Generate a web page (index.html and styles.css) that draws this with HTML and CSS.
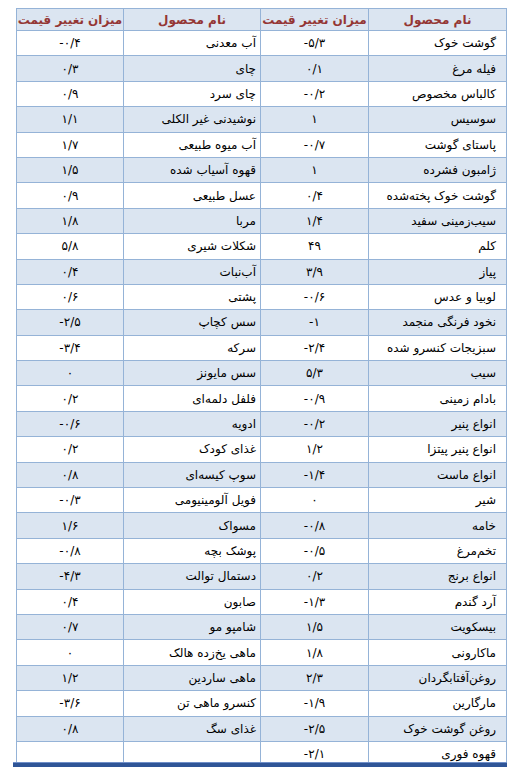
FILE: index.html
```html
<!DOCTYPE html>
<html lang="fa">
<head>
<meta charset="utf-8">
<link rel="stylesheet" href="styles.css">
</head>
<body>
<div class="page">
<table class="prices" dir="rtl">
<thead>
<tr><th class="c1">نام محصول</th><th class="c2">میزان تغییر قیمت</th><th class="c3">نام محصول</th><th class="c4">میزان تغییر قیمت</th></tr>
</thead>
<tbody>
<tr><td class="name n1">گوشت خوک</td><td class="val">-۵/۳</td><td class="name n2">آب معدنی</td><td class="val">-۰/۴</td></tr>
<tr><td class="name n1">فیله مرغ</td><td class="val">۰/۱</td><td class="name n2">چای</td><td class="val">۰/۳</td></tr>
<tr><td class="name n1">کالباس مخصوص</td><td class="val">-۰/۲</td><td class="name n2">چای سرد</td><td class="val">۰/۹</td></tr>
<tr><td class="name n1">سوسیس</td><td class="val">۱</td><td class="name n2">نوشیدنی غیر الکلی</td><td class="val">۱/۱</td></tr>
<tr><td class="name n1">پاستای گوشت</td><td class="val">-۰/۷</td><td class="name n2">آب میوه طبیعی</td><td class="val">۱/۷</td></tr>
<tr><td class="name n1">ژامبون فشرده</td><td class="val">۱</td><td class="name n2">قهوه آسیاب شده</td><td class="val">۱/۵</td></tr>
<tr><td class="name n1">گوشت خوک پخته‌شده</td><td class="val">۰/۴</td><td class="name n2">عسل طبیعی</td><td class="val">۰/۹</td></tr>
<tr><td class="name n1">سیب‌زمینی سفید</td><td class="val">۱/۴</td><td class="name n2">مربا</td><td class="val">۱/۸</td></tr>
<tr><td class="name n1">کلم</td><td class="val">۴۹</td><td class="name n2">شکلات شیری</td><td class="val">۵/۸</td></tr>
<tr><td class="name n1">پیاز</td><td class="val">۳/۹</td><td class="name n2">آب‌نبات</td><td class="val">۰/۴</td></tr>
<tr><td class="name n1">لوبیا و عدس</td><td class="val">-۰/۶</td><td class="name n2">پشتی</td><td class="val">۰/۶</td></tr>
<tr><td class="name n1">نخود فرنگی منجمد</td><td class="val">-۱</td><td class="name n2">سس کچاپ</td><td class="val">-۲/۵</td></tr>
<tr><td class="name n1">سبزیجات کنسرو شده</td><td class="val">-۲/۴</td><td class="name n2">سرکه</td><td class="val">-۳/۴</td></tr>
<tr><td class="name n1">سیب</td><td class="val">۵/۳</td><td class="name n2">سس مایونز</td><td class="val">۰</td></tr>
<tr><td class="name n1">بادام زمینی</td><td class="val">-۰/۹</td><td class="name n2">فلفل دلمه‌ای</td><td class="val">۰/۲</td></tr>
<tr><td class="name n1">انواع پنیر</td><td class="val">-۰/۲</td><td class="name n2">ادویه</td><td class="val">-۰/۶</td></tr>
<tr><td class="name n1">انواع پنیر پیتزا</td><td class="val">۱/۲</td><td class="name n2">غذای کودک</td><td class="val">۰/۲</td></tr>
<tr><td class="name n1">انواع ماست</td><td class="val">-۱/۴</td><td class="name n2">سوپ کیسه‌ای</td><td class="val">۰/۸</td></tr>
<tr><td class="name n1">شیر</td><td class="val">۰</td><td class="name n2">فویل آلومینیومی</td><td class="val">-۰/۳</td></tr>
<tr><td class="name n1">خامه</td><td class="val">-۰/۸</td><td class="name n2">مسواک</td><td class="val">۱/۶</td></tr>
<tr><td class="name n1">تخم‌مرغ</td><td class="val">-۰/۵</td><td class="name n2">پوشک بچه</td><td class="val">-۰/۸</td></tr>
<tr><td class="name n1">انواع برنج</td><td class="val">۰/۲</td><td class="name n2">دستمال توالت</td><td class="val">-۴/۳</td></tr>
<tr><td class="name n1">آرد گندم</td><td class="val">-۱/۳</td><td class="name n2">صابون</td><td class="val">۰/۴</td></tr>
<tr><td class="name n1">بیسکویت</td><td class="val">۱/۵</td><td class="name n2">شامپو مو</td><td class="val">۰/۷</td></tr>
<tr><td class="name n1">ماکارونی</td><td class="val">۱/۸</td><td class="name n2">ماهی یخ‌زده هالک</td><td class="val">۰</td></tr>
<tr><td class="name n1">روغن‌آفتابگردان</td><td class="val">۲/۳</td><td class="name n2">ماهی ساردین</td><td class="val">۱/۲</td></tr>
<tr><td class="name n1">مارگارین</td><td class="val">-۱/۹</td><td class="name n2">کنسرو ماهی تن</td><td class="val">-۳/۶</td></tr>
<tr><td class="name n1">روغن گوشت خوک</td><td class="val">-۲/۵</td><td class="name n2">غذای سگ</td><td class="val">۰/۸</td></tr>
<tr><td class="name n1">قهوه فوری</td><td class="val">-۲/۱</td><td class="name n2"></td><td class="val"></td></tr>
</tbody>
</table>
</div>
<div class="bottom-bar"></div>
</body>
</html>
```
FILE: styles.css
```css
html, body {
  margin: 0;
  padding: 0;
  background: #ffffff;
}
body {
  width: 511px;
  height: 767px;
  overflow: hidden;
  position: relative;
  font-family: "DejaVu Sans", "Noto Sans", sans-serif;
}
.page {
  padding: 8px 0 0 16px;
  height: 755px;
  overflow: hidden;
}
.prices {
  width: 486px;
  border-collapse: collapse;
  table-layout: fixed;
}
.prices th,
.prices td {
  border: 1px solid #95b3d7;
  padding: 0;
  white-space: nowrap;
  overflow: hidden;
}
.prices th {
  height: 21px;
  background: #dbe5f1;
  color: #943634;
  font-size: 12px;
  font-weight: bold;
  text-align: center;
}
.c1 { width: 137px; }
.c2 { width: 107px; }
.c3 { width: 136px; }
.c4 { width: 106px; }
.prices td {
  height: 24.4px;
  font-size: 12px;
  color: #000000;
}
.prices tbody tr:nth-child(even) td {
  background: #dbe5f1;
}
.prices td.name { text-align: right; }
.prices td.n1 { padding-right: 10px; }
.prices td.n2 { padding-right: 4px; }
.prices td.val {
  text-align: center;
  direction: ltr;
}
.bottom-bar {
  position: absolute;
  left: 13px;
  right: 4px;
  bottom: 0;
  height: 4px;
  background: #2f5597;
  border-top: 1px solid #6f8fc9;
}
```
